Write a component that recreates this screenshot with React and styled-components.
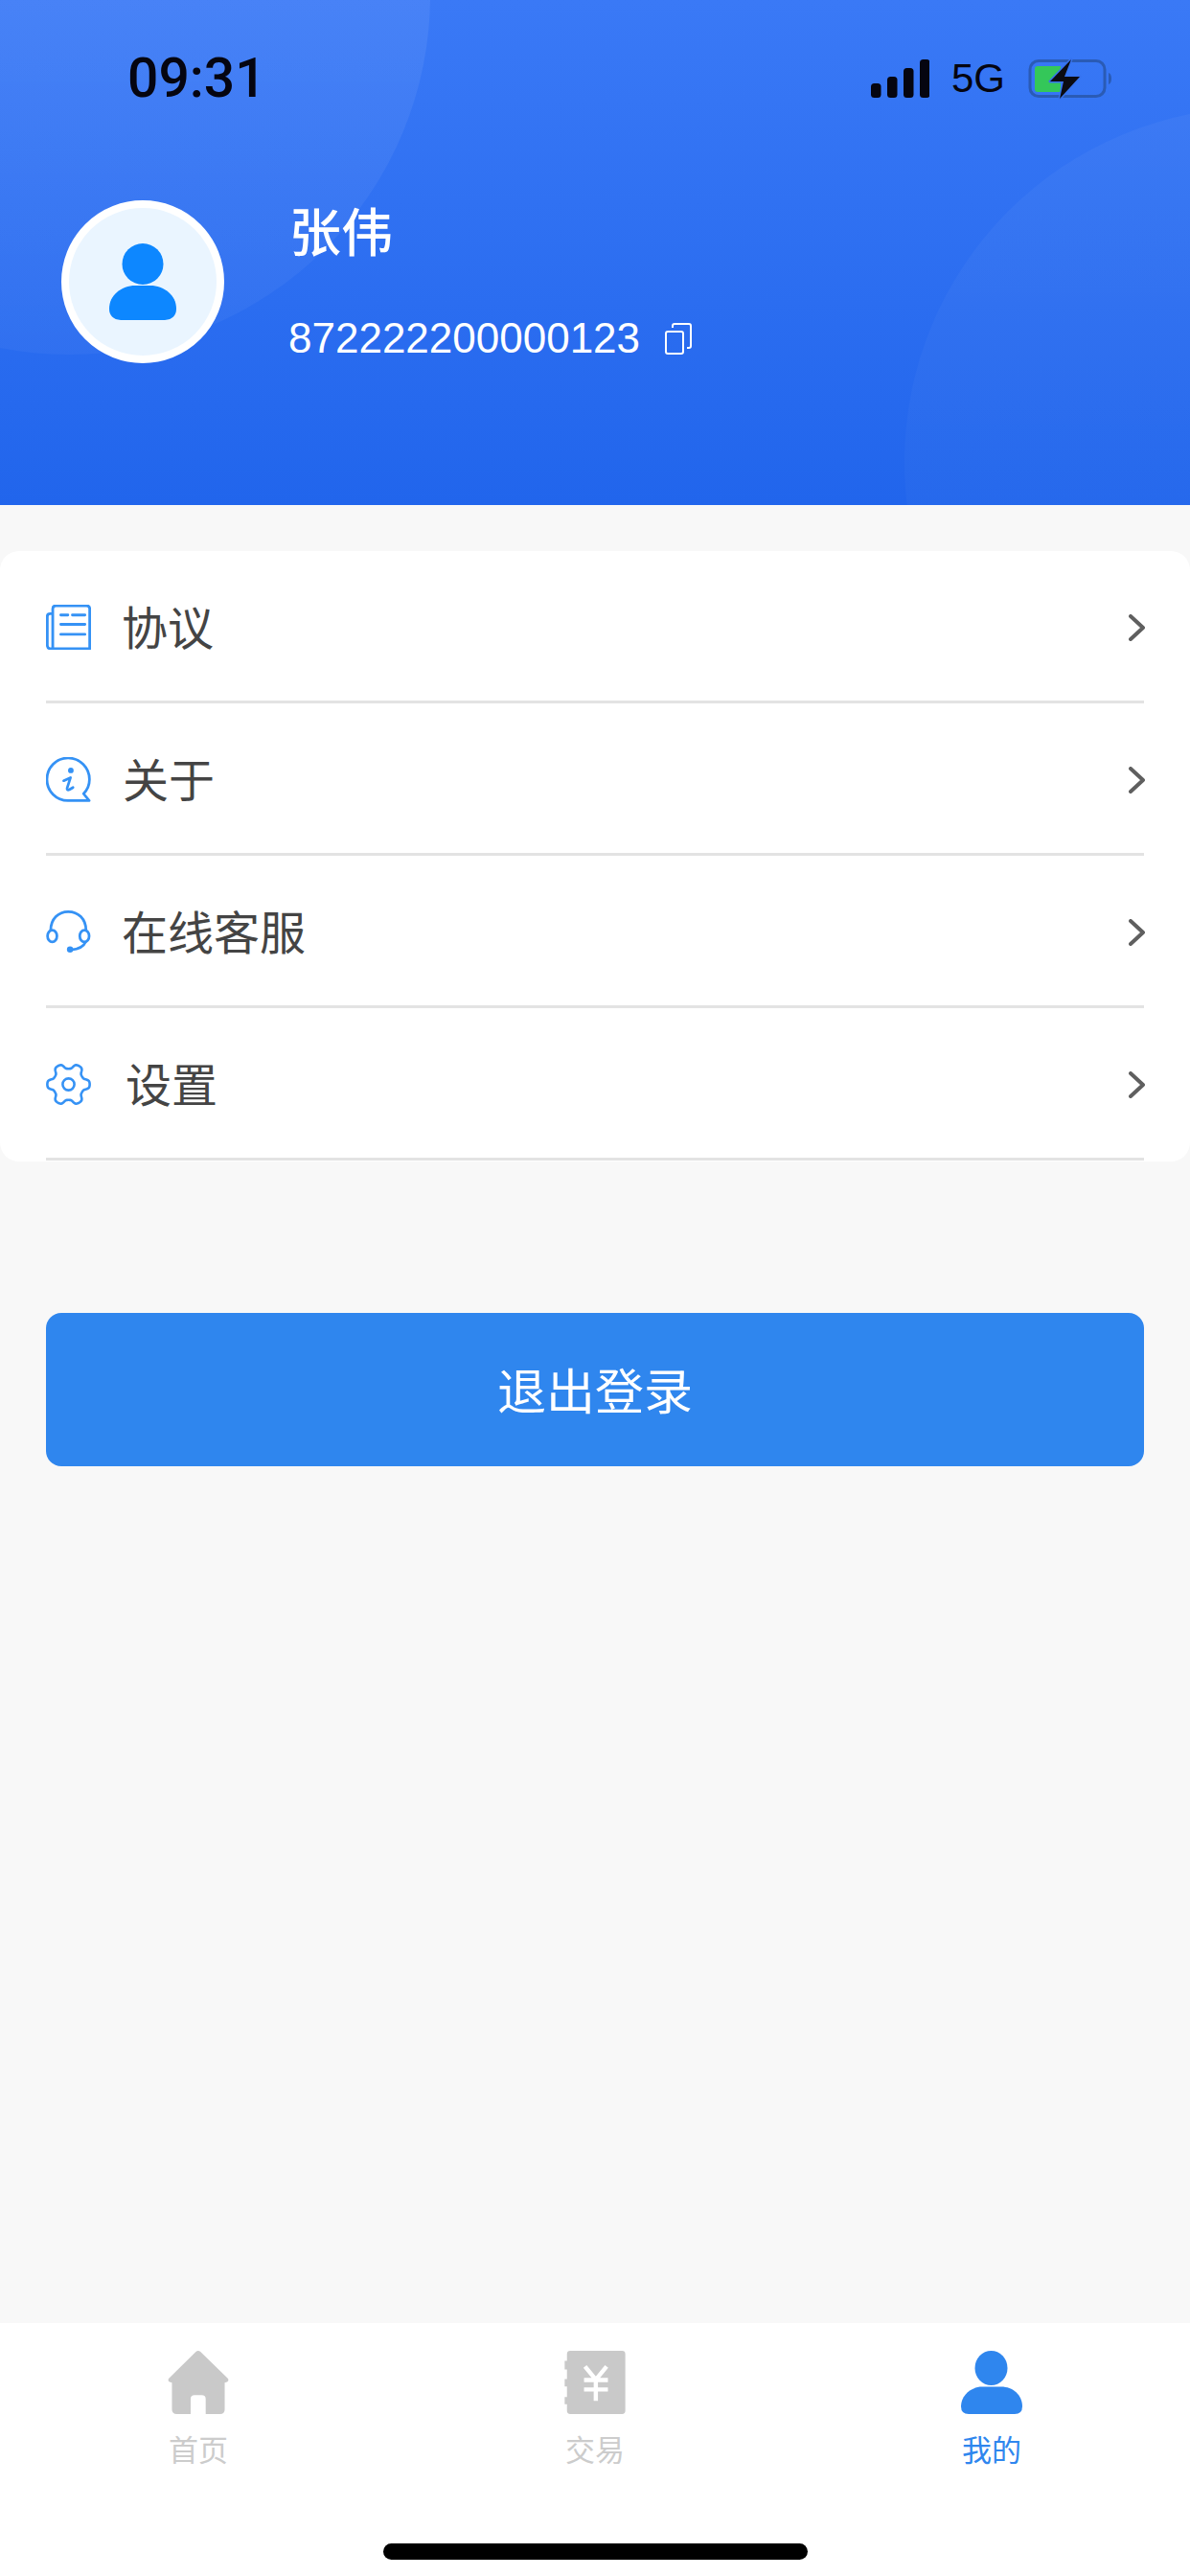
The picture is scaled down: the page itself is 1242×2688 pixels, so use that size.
import React from 'react'
import styled, { createGlobalStyle } from 'styled-components'

const BLUE = '#2F86EE'
const ICON_BLUE = '#3592F5'
const CJK = '"Noto Sans CJK SC", "Liberation Sans", sans-serif'

const GlobalStyle = createGlobalStyle`
    html, body {
        margin: 0;
        padding: 0;
        background: #f8f8f8;
    }
    * {
        box-sizing: border-box;
    }
`

// six squared-off lobes, same shape as the settings cog in the reference
function cogPath(cx, cy) {
    const points = []
    for (let i = 0; i < 180; i++) {
        const a = (i / 180) * Math.PI * 2
        const r = 63 + 10 * Math.tanh(1.8 * Math.cos(6 * a))
        points.push(`${(cx + r * Math.cos(a)).toFixed(1)} ${(cy + r * Math.sin(a)).toFixed(1)}`)
    }
    return `M${points.join('L')}Z`
}

const AgreementIcon = () => (
    <MenuSvg viewBox="145 185 138 140">
        <path d="M165 322V198Q165 188 175 188H270Q280 188 280 198V322H160Q148 322 148 310V222Q148 213 157 213H165" />
        <path d="M190 217H212M226 217H265M190 246H265M190 277H265" />
    </MenuSvg>
)

const AboutIcon = () => (
    <MenuSvg viewBox="145 660 145 145">
        <path d="M284 800H216C178 800 148 770 148 732C148 694 178 663 216 663C254 663 285 694 285 732C285 750 279 765 266 778Z" />
        <circle cx="225" cy="703" r="9" fill={ICON_BLUE} stroke="none" />
        <path d="M202 736L224 726L213 760Q212 768 220 765L232 758" />
    </MenuSvg>
)

const ServiceIcon = () => (
    <MenuSvg viewBox="142 152 144 140">
        <path d="M157 217C157 180 182 157 213 157C245 157 270 180 270 217" />
        <ellipse cx="162" cy="235" rx="15" ry="19" />
        <ellipse cx="265" cy="235" rx="15" ry="19" />
        <path d="M268 255C262 270 245 277 222 279" />
        <circle cx="219" cy="278" r="10" fill={ICON_BLUE} stroke="none" />
    </MenuSvg>
)

const SettingsIcon = () => (
    <MenuSvg viewBox="143 628 154 146">
        <path d={cogPath(220, 701)} />
        <circle cx="220" cy="701" r="20" />
    </MenuSvg>
)

const items = [
    { label: '协议', icon: AgreementIcon, gap: 32 },
    { label: '关于', icon: AboutIcon, gap: 33 },
    { label: '在线客服', icon: ServiceIcon, gap: 32 },
    { label: '设置', icon: SettingsIcon, gap: 36 },
]

function App() {
    return (
        <Page>
            <GlobalStyle />
            <Header>
                <CircleLeft />
                <CircleRight />
                <StatusBar>
                    <Time>09:31</Time>
                    <StatusRight>
                        <svg width="61" height="40" viewBox="0 0 61 40">
                            <rect x="0" y="25" width="10.5" height="15" rx="3.5" />
                            <rect x="17" y="18" width="10.5" height="22" rx="3.5" />
                            <rect x="34" y="9" width="10.5" height="31" rx="3.5" />
                            <rect x="51" y="0" width="10.5" height="40" rx="3.5" />
                        </svg>
                        <Network>5G</Network>
                        <svg width="90" height="44" viewBox="0 0 90 44">
                            <rect x="3" y="3.5" width="78" height="37" rx="9" fill="none" stroke="#2A5BB5" strokeWidth="3" />
                            <path d="M85 16Q88 17 88 22Q88 27 85 28Z" fill="#2A5BB5" />
                            <path d="M11 9H35V36H11Q8 36 8 33V12Q8 9 11 9Z" fill="#34C759" />
                            <path d="M46 2L24 25H38L34 43L55 20H39Z" fill="#0B0B12" stroke="#3672ee" strokeWidth="3" paintOrder="stroke" strokeLinejoin="round" />
                        </svg>
                    </StatusRight>
                </StatusBar>
                <Profile>
                    <Avatar>
                        <svg width="70" height="80" viewBox="0 0 70 80">
                            <ellipse cx="35" cy="21.500" rx="21.500" ry="21.500" fill="#0D87FF" />
                            <path d="M0 68C0 54 13 44 27 44H43C57 44 70 54 70 68Q70 79 58 80H12Q0 79 0 68Z" fill="#0D87FF" />
                        </svg>
                    </Avatar>
                    <Info>
                        <Name>张伟</Name>
                        <Account>
                            872222200000123
                            <svg width="28" height="33" viewBox="0 0 28 33" fill="none" stroke="#fff" strokeWidth="2">
                                <rect x="1" y="9" width="18" height="23" rx="2" />
                                <path d="M8 5V3Q8 1 10 1H25Q27 1 27 3V24Q27 26 25 26H23" />
                            </svg>
                        </Account>
                    </Info>
                </Profile>
            </Header>

            <MenuCard>
                {items.map((item) => (
                    <MenuRow key={item.label}>
                        <item.icon />
                        <MenuLabel $gap={item.gap}>{item.label}</MenuLabel>
                        <Chevron viewBox="0 0 17 28">
                            <path d="M2 2L15 14L2 26" />
                        </Chevron>
                    </MenuRow>
                ))}
            </MenuCard>

            <LogoutButton>退出登录</LogoutButton>

            <TabBar>
                <Tabs>
                    <Tab>
                        <svg width="64" height="66" viewBox="103 95 185 193" fill="#C9C9C9">
                            <path d="M188 98Q195 92 202 98L286 180Q291 190 276 192V274Q276 288 262 288H218V242Q218 230 206 230H184Q172 230 172 242V288H130Q115 288 115 274V192Q100 190 105 180Z" />
                        </svg>
                        <TabLabel>首页</TabLabel>
                    </Tab>
                    <Tab>
                        <svg width="64" height="66" viewBox="1305 95 185 193">
                            <path fill="#C9C9C9" d="M1322 95H1480Q1490 95 1490 105V278Q1490 288 1480 288H1322Q1312 288 1312 278V258H1305V236H1312V204H1305V181H1312V152H1305V126H1312V105Q1312 95 1322 95Z" />
                            <path fill="none" stroke="#fff" strokeWidth="13" d="M1367 143L1400 183L1433 143M1364 184H1437M1364 213H1437M1400 184V248" />
                        </svg>
                        <TabLabel>交易</TabLabel>
                    </Tab>
                    <Tab>
                        <svg width="64" height="66" viewBox="0 0 64 66" fill={BLUE}>
                            <ellipse cx="31.500" cy="18" rx="17" ry="18" />
                            <path d="M0 58C0 46 11 37.500 22 37.500H42C54 37.500 64 46 64 58Q64 66 56 66H8Q0 66 0 58Z" />
                        </svg>
                        <TabLabel $active>我的</TabLabel>
                    </Tab>
                </Tabs>
                <HomeIndicator />
            </TabBar>
        </Page>
    )
}

export default App

const Page = styled.div`
    width: 1242px;
    height: 2688px;
    display: flex;
    flex-direction: column;
    background: #f8f8f8;
    overflow: hidden;
`

const Header = styled.div`
    position: relative;
    height: 527px;
    padding-top: 54px;
    overflow: hidden;
    background: linear-gradient(180deg, #3a79f6 0%, #2165ec 100%);
    flex-shrink: 0;
`

const CircleLeft = styled.div`
    position: absolute;
    left: -305px;
    top: -380px;
    width: 754px;
    height: 750px;
    border-radius: 50%;
    background: linear-gradient(180deg, rgba(255, 255, 255, 0.07) 50%, rgba(255, 255, 255, 0.035) 100%);
`

const CircleRight = styled.div`
    position: absolute;
    left: 944px;
    top: 112px;
    width: 740px;
    height: 740px;
    border-radius: 50%;
    background: linear-gradient(180deg, rgba(255, 255, 255, 0.04) 0%, rgba(255, 255, 255, 0.025) 50%);
`

const StatusBar = styled.div`
    position: relative;
    display: flex;
    align-items: center;
    justify-content: space-between;
    height: 56px;
    padding: 0 80px 0 133px;
`

const Time = styled.div`
    font-family: Roboto, "Liberation Sans", sans-serif;
    font-weight: 500;
    font-size: 57px;
    line-height: 58px;
    color: #050510;
`

const StatusRight = styled.div`
    display: flex;
    align-items: center;
    gap: 23px;

    svg:first-child {
        fill: #050510;
    }
`

const Network = styled.div`
    font-family: "Liberation Sans", Arial, sans-serif;
    font-size: 42px;
    line-height: 44px;
    color: #050510;
`

const Profile = styled.div`
    position: relative;
    display: flex;
    align-items: flex-start;
    margin-top: 99px;
    padding-left: 64px;
`

const Avatar = styled.div`
    width: 170px;
    height: 170px;
    border-radius: 50%;
    border: 8px solid #fff;
    background: #eaf5ff;
    display: flex;
    align-items: center;
    justify-content: center;
`

const Info = styled.div`
    display: flex;
    flex-direction: column;
    margin-left: 67px;
    margin-top: 1px;
    color: #fff;
`

const Name = styled.div`
    font-family: ${CJK};
    font-weight: 500;
    font-size: 54px;
    line-height: 60px;
    margin-left: 1px;
`

const Account = styled.div`
    display: flex;
    align-items: center;
    gap: 26px;
    margin-top: 58px;
    font-family: "Liberation Sans", Arial, sans-serif;
    font-size: 44px;
    line-height: 50px;
`

const MenuCard = styled.div`
    margin-top: 48px;
    height: 637px;
    background: #fff;
    border-radius: 20px;
    flex-shrink: 0;
`

const MenuRow = styled.div`
    display: flex;
    align-items: center;
    height: 159px;
    margin: 0 48px;
    border-bottom: 3px solid #e3e3e3;
`

const MenuSvg = styled.svg`
    width: 47px;
    height: 47px;
    fill: none;
    stroke: ${ICON_BLUE};
    stroke-width: 8.500;
    stroke-linecap: round;
    stroke-linejoin: round;
    flex-shrink: 0;
    margin-top: 2px;
`

const MenuLabel = styled.div`
    flex: 1;
    margin-left: ${(props) => props.$gap}px;
    margin-top: -2px;
    font-family: ${CJK};
    font-size: 48px;
    line-height: 60px;
    color: #444;
`

const Chevron = styled.svg`
    width: 17px;
    height: 28px;
    margin-top: 4px;
    margin-right: -1px;
    fill: none;
    stroke: #5f5f5f;
    stroke-width: 4;
    stroke-linecap: round;
    stroke-linejoin: round;
`

const LogoutButton = styled.button`
    display: block;
    width: 1146px;
    height: 160px;
    margin: 158px 48px 0;
    padding: 0 0 3px;
    border: none;
    border-radius: 16px;
    background: ${BLUE};
    color: #fff;
    font-family: ${CJK};
    font-size: 51px;
    flex-shrink: 0;
`

const TabBar = styled.div`
    margin-top: auto;
    height: 264px;
    padding-top: 29px;
    background: #fff;
    display: flex;
    flex-direction: column;
    align-items: center;
`

const Tabs = styled.div`
    width: 100%;
    display: grid;
    grid-template-columns: repeat(3, 1fr);
`

const Tab = styled.div`
    display: flex;
    flex-direction: column;
    align-items: center;
`

const TabLabel = styled.div`
    margin-top: 18px;
    font-family: ${CJK};
    font-size: 31px;
    line-height: 36px;
    color: ${(props) => (props.$active ? BLUE : '#cccccc')};
`

const HomeIndicator = styled.div`
    width: 443px;
    height: 17px;
    margin-top: 81px;
    border-radius: 9px;
    background: #000;
`
